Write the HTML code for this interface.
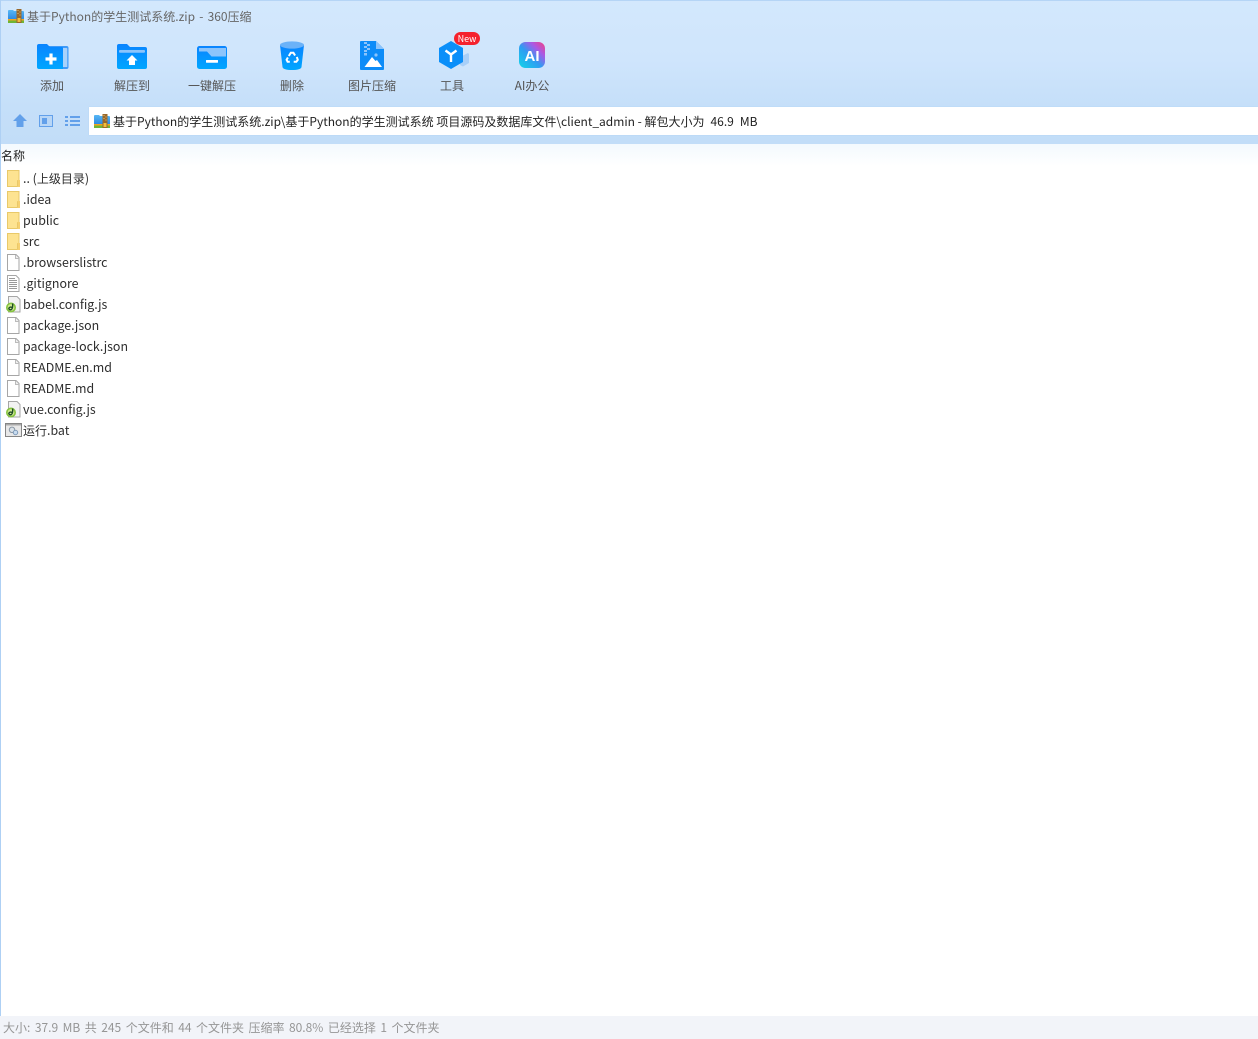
<!DOCTYPE html>
<html lang="zh-CN">
<head>
<meta charset="utf-8">
<title>基于Python的学生测试系统.zip - 360压缩</title>
<style>
html,body{margin:0;padding:0;background:#fff}
body{width:1258px;height:1039px;position:relative;overflow:hidden;font-family:"Noto Sans CJK SC","Liberation Sans",sans-serif;font-size:12px;color:#333}
.a{position:absolute;white-space:nowrap}
#top{position:absolute;left:0;top:0;width:1258px;height:144px;background:linear-gradient(#d3e8fd 0,#cfe5fc 60px,#c5dff9 106px,#c2ddf8 144px);}
#tl{position:absolute;left:0;top:0;width:1258px;height:1px;background:#b5d5f6}
#ll{position:absolute;left:0;top:0;width:1px;height:1016px;background:#aed0f4}
#addr{position:absolute;left:89px;top:107px;width:1169px;height:28px;background:#fff;box-shadow:0 0 1px #a9cdf2}
#hdr{position:absolute;left:1px;top:144px;width:1257px;height:22px;background:linear-gradient(#f3f9fe,#fff)}
#status{position:absolute;left:0;top:1016px;width:1258px;height:23px;background:#f2f4f9}
.tb{position:absolute;top:78px;width:80px;text-align:center;font-size:12px;color:#555;line-height:16px}
.f{position:absolute;left:23px;height:21px;line-height:21px;font-size:12.4px;color:#2e2e2e;white-space:nowrap}
.f span{font-size:12px}
.i{position:absolute;left:5px}
</style>
</head>
<body>
<div id="top"></div><div id="tl"></div>
<div id="hdr"></div><div id="ll"></div>

<svg width="0" height="0" style="position:absolute"><defs>
<linearGradient id="b" x1="0" y1="0" x2="0" y2="1"><stop offset="0" stop-color="#0a84ff"/><stop offset="1" stop-color="#00a6ff"/></linearGradient>
<linearGradient id="zb" x1="0" y1="0" x2="0" y2="1"><stop offset="0" stop-color="#58b8f5"/><stop offset="1" stop-color="#2a86e0"/></linearGradient>
<symbol id="zip" viewBox="0 0 16 15"><path d="M0 2a1 1 0 0 1 1-1h4l1 1h9a1 1 0 0 1 1 1v8H0z" fill="url(#zb)"/><rect x="0" y="10" width="16" height="1.500" fill="#f2a51f"/><rect x="0" y="11.500" width="16" height="2.500" fill="#6fb536"/><rect x="8.500" y="0" width="5" height="14" fill="#99682a"/><path d="M9.500 1h1v1h-1zM11.500 2.500h1v1h-1zM9.500 4h1v1h-1zM11.500 5.500h1v1h-1z" fill="#e4c27a"/><rect x="9.500" y="9" width="3" height="4" fill="#f2bd3a"/></symbol>
<symbol id="folder" viewBox="0 0 16 17"><path d="M2.500 .5h11.500v16H2.500z" fill="#fde391" stroke="#e9c969"/><path d="M12 10h3v7h-3z" fill="#f6d071"/><path d="M12.500 10.500v6" stroke="#e9c969"/></symbol>
<symbol id="file" viewBox="0 0 16 17"><path d="M2.500 .5h8.500l3 3v13H2.500z" fill="#fff" stroke="#a6a6a6"/><path d="M10.500 1v3.500H14" fill="#eee" stroke="#bbb"/></symbol>
<symbol id="txt" viewBox="0 0 16 17"><path d="M2.500 .5h8.500l3 3v13H2.500z" fill="#fff" stroke="#a6a6a6"/><path d="M4 3.500h6M4 5.500h8M4 7.500h8M4 9.500h8M4 11.500h8M4 13.500h8" stroke="#999"/></symbol>
<symbol id="js" viewBox="0 0 16 17"><path d="M3.500 .5h8.500l3 3v12.500h-11.500z" fill="#f2f2f2" stroke="#a6a6a6"/><circle cx="6" cy="11.500" r="5" fill="#86c440"/><circle cx="6" cy="11.500" r="3.400" fill="#cfe88f"/><path d="M7.600 7.500c.3 3 .1 5-1.200 6-1 .6-2.300.2-2.600-1 .2-1.300 1.600-1.700 3-1.200" fill="none" stroke="#1c4a26" stroke-width="1.400"/></symbol>
<symbol id="bat" viewBox="0 0 18 14"><rect x=".5" y=".5" width="16" height="13" fill="#e8e8e8" stroke="#858585"/><rect x="1" y="1" width="15" height="1.500" fill="#aaa"/><circle cx="7" cy="6.800" r="2.700" fill="#dbe3ea" stroke="#8a97a5"/><circle cx="10.500" cy="9.500" r="2.200" fill="#c8dcf0" stroke="#7f9ab8"/></symbol>
</defs></svg>

<svg class="a" style="left:8px;top:9px" width="16" height="15"><use href="#zip"/></svg>
<div class="a" style="left:27px;top:8px;line-height:18px;font-size:12px;color:#666;word-spacing:1.500px">基于Python的学生测试系统.zip - 360压缩</div>

<!-- add -->
<svg class="a" style="left:36px;top:43px" width="33" height="27" viewBox="0 0 33 27"><path d="M6 3h24.500a2 2 0 0 1 2 2v19a2 2 0 0 1-2 2H6z" fill="#3f9af8"/><path d="M27 5h3.500a.8.8 0 0 1 .8.8V24h-4.300z" fill="#a8d2fb"/><path d="M1 3a2 2 0 0 1 2-2h8l3 3h12a1 1 0 0 1 1 1v21H3a2 2 0 0 1-2-2z" fill="url(#b)"/><path d="M9.500 16h11M15 10.500v11" stroke="#fff" stroke-width="3.200"/></svg>
<!-- extract to -->
<svg class="a" style="left:116px;top:43px" width="32" height="27" viewBox="0 0 32 27"><path d="M1 3a2 2 0 0 1 2-2h8l3 3h15a2 2 0 0 1 2 2v18a2 2 0 0 1-2 2H3a2 2 0 0 1-2-2z" fill="url(#b)"/><rect x="3" y="7" width="26" height="2.700" rx="1" fill="#8cc4fb"/><path d="M16 12l5.500 5.500H19V22h-6v-4.500h-2.500z" fill="#fff"/></svg>
<!-- one click -->
<svg class="a" style="left:196px;top:45px" width="32" height="25" viewBox="0 0 32 25"><rect x="1" y="1" width="30" height="23" rx="2.500" fill="url(#b)"/><path d="M3 3h27v8.500H15.500L11 6.500H3z" fill="#8cc4fb"/><rect x="10" y="15" width="12" height="2.700" rx=".5" fill="#fff"/></svg>
<!-- delete -->
<svg class="a" style="left:279px;top:40px" width="26" height="31" viewBox="0 0 26 31"><path d="M1 5l2.500 22c.3 2 4 3 9.500 3s9.200-1 9.500-3L25 5z" fill="url(#b)"/><ellipse cx="13" cy="5" rx="12" ry="3.600" fill="#6bb2f8"/><path d="M9.800 16l2-3.200h2.600l1.700 2.700M17.800 17l1 2.800-1.500 2h-2.600M10.800 21.800H8.600l-1-2 1.300-2.300" fill="none" stroke="#fff" stroke-width="2"/></svg>
<!-- image -->
<svg class="a" style="left:360px;top:41px" width="24" height="29" viewBox="0 0 24 29"><path d="M1 0h15l8 8v20a1 1 0 0 1-1 1H1a1 1 0 0 1-1-1V1a1 1 0 0 1 1-1z" fill="#0d8cf8"/><path d="M16 0l8 8h-8z" fill="#8cc4fb"/><path d="M4 1h3v2H4zM7 3h3v2H7zM4 5h3v2H4zM7 7h3v2H7zM4 9h3v2H4zM4 12h3v2.500H4z" fill="#8cc4fb"/><circle cx="16" cy="14" r="1.600" fill="#8cc4fb"/><path d="M4.500 26l7.500-10 3.500 4 1.500-1 5 7z" fill="#fff"/></svg>
<!-- tools -->
<svg class="a" style="left:438px;top:40px" width="32" height="30" viewBox="0 0 32 30"><path d="M24 16l6-3 1 1 0 9-6 3.500-3-1.500z" fill="#a8cff8"/><path d="M13 1l12 7v14l-12 7-12-7V8z" fill="#0b8ff9"/><path d="M7.500 10.500l5.500 4 5.500-4M13 14.500v7.500" fill="none" stroke="#fff" stroke-width="2.400"/></svg>
<div class="a" style="left:454px;top:32px;width:26px;height:13px;border-radius:7px;background:#f5222d;color:#fff;font-size:9px;line-height:13px;text-align:center">New</div>
<!-- AI -->
<svg class="a" style="left:519px;top:42px" width="26" height="26" viewBox="0 0 26 26"><defs><linearGradient id="d" x1="0" y1="1" x2="1" y2="0"><stop offset="0" stop-color="#12d6e8"/><stop offset=".45" stop-color="#2f9cf2"/><stop offset=".72" stop-color="#a95ae6"/><stop offset="1" stop-color="#f53f7e"/></linearGradient></defs><rect width="26" height="26" rx="6.500" fill="url(#d)"/><text x="13" y="19" text-anchor="middle" font-family="Liberation Sans" font-weight="bold" font-size="15" fill="#fff">AI</text></svg>

<div class="tb" style="left:12px">添加</div>
<div class="tb" style="left:92px">解压到</div>
<div class="tb" style="left:172px">一键解压</div>
<div class="tb" style="left:252px">删除</div>
<div class="tb" style="left:332px">图片压缩</div>
<div class="tb" style="left:412px">工具</div>
<div class="tb" style="left:492px">AI办公</div>

<!-- nav -->
<svg class="a" style="left:13px;top:114px" width="14" height="14" viewBox="0 0 14 14"><path d="M7 0l7 7h-3.500v6h-7V7H0z" fill="#62a0ea"/></svg>
<svg class="a" style="left:39px;top:115px" width="14" height="12" viewBox="0 0 14 12"><rect x=".5" y=".5" width="13" height="11" fill="#b8d6f6" stroke="#62a0ea"/><rect x="3" y="3" width="5" height="6" fill="#62a0ea"/></svg>
<svg class="a" style="left:65px;top:115px" width="15" height="12" viewBox="0 0 15 12"><path d="M0 1h3v2H0zM5 1h10v2H5zM0 5h3v2H0zM5 5h10v2H5zM0 9h3v2H0zM5 9h10v2H5z" fill="#62a0ea"/></svg>

<div id="addr"></div>
<svg class="a" style="left:94px;top:114px" width="16" height="15"><use href="#zip"/></svg>
<div class="a" style="left:113px;top:113px;line-height:18px;font-size:12px;color:#222">基于Python的学生测试系统.zip\基于Python的学生测试系统 项目源码及数据库文件\client_admin - 解包大小为<span style="word-spacing:3.300px"> 46.9 MB</span></div>

<div class="a" style="left:1px;top:147px;line-height:18px;font-size:12px;color:#222">名称</div>

<svg class="i" style="top:170px" width="16" height="17"><use href="#folder"/></svg><div class="f" style="top:168px">.. (<span>上级目录</span>)</div>
<svg class="i" style="top:191px" width="16" height="17"><use href="#folder"/></svg><div class="f" style="top:189px">.idea</div>
<svg class="i" style="top:212px" width="16" height="17"><use href="#folder"/></svg><div class="f" style="top:210px">public</div>
<svg class="i" style="top:233px" width="16" height="17"><use href="#folder"/></svg><div class="f" style="top:231px">src</div>
<svg class="i" style="top:254px" width="16" height="17"><use href="#file"/></svg><div class="f" style="top:252px">.browserslistrc</div>
<svg class="i" style="top:275px" width="16" height="17"><use href="#txt"/></svg><div class="f" style="top:273px">.gitignore</div>
<svg class="i" style="top:296px" width="16" height="17"><use href="#js"/></svg><div class="f" style="top:294px">babel.config.js</div>
<svg class="i" style="top:317px" width="16" height="17"><use href="#file"/></svg><div class="f" style="top:315px">package.json</div>
<svg class="i" style="top:338px" width="16" height="17"><use href="#file"/></svg><div class="f" style="top:336px">package-lock.json</div>
<svg class="i" style="top:359px" width="16" height="17"><use href="#file"/></svg><div class="f" style="top:357px">README.en.md</div>
<svg class="i" style="top:380px" width="16" height="17"><use href="#file"/></svg><div class="f" style="top:378px">README.md</div>
<svg class="i" style="top:401px" width="16" height="17"><use href="#js"/></svg><div class="f" style="top:399px">vue.config.js</div>
<svg class="i" style="top:423px" width="18" height="14"><use href="#bat"/></svg><div class="f" style="top:420px"><span>运行</span>.bat</div>

<div id="status"></div>
<div class="a" style="left:3px;top:1019px;line-height:17px;font-size:12px;color:#969696;word-spacing:1.800px">大小: 37.9 MB 共 245 个文件和 44 个文件夹 压缩率 80.8% 已经选择 1 个文件夹</div>
</body>
</html>
